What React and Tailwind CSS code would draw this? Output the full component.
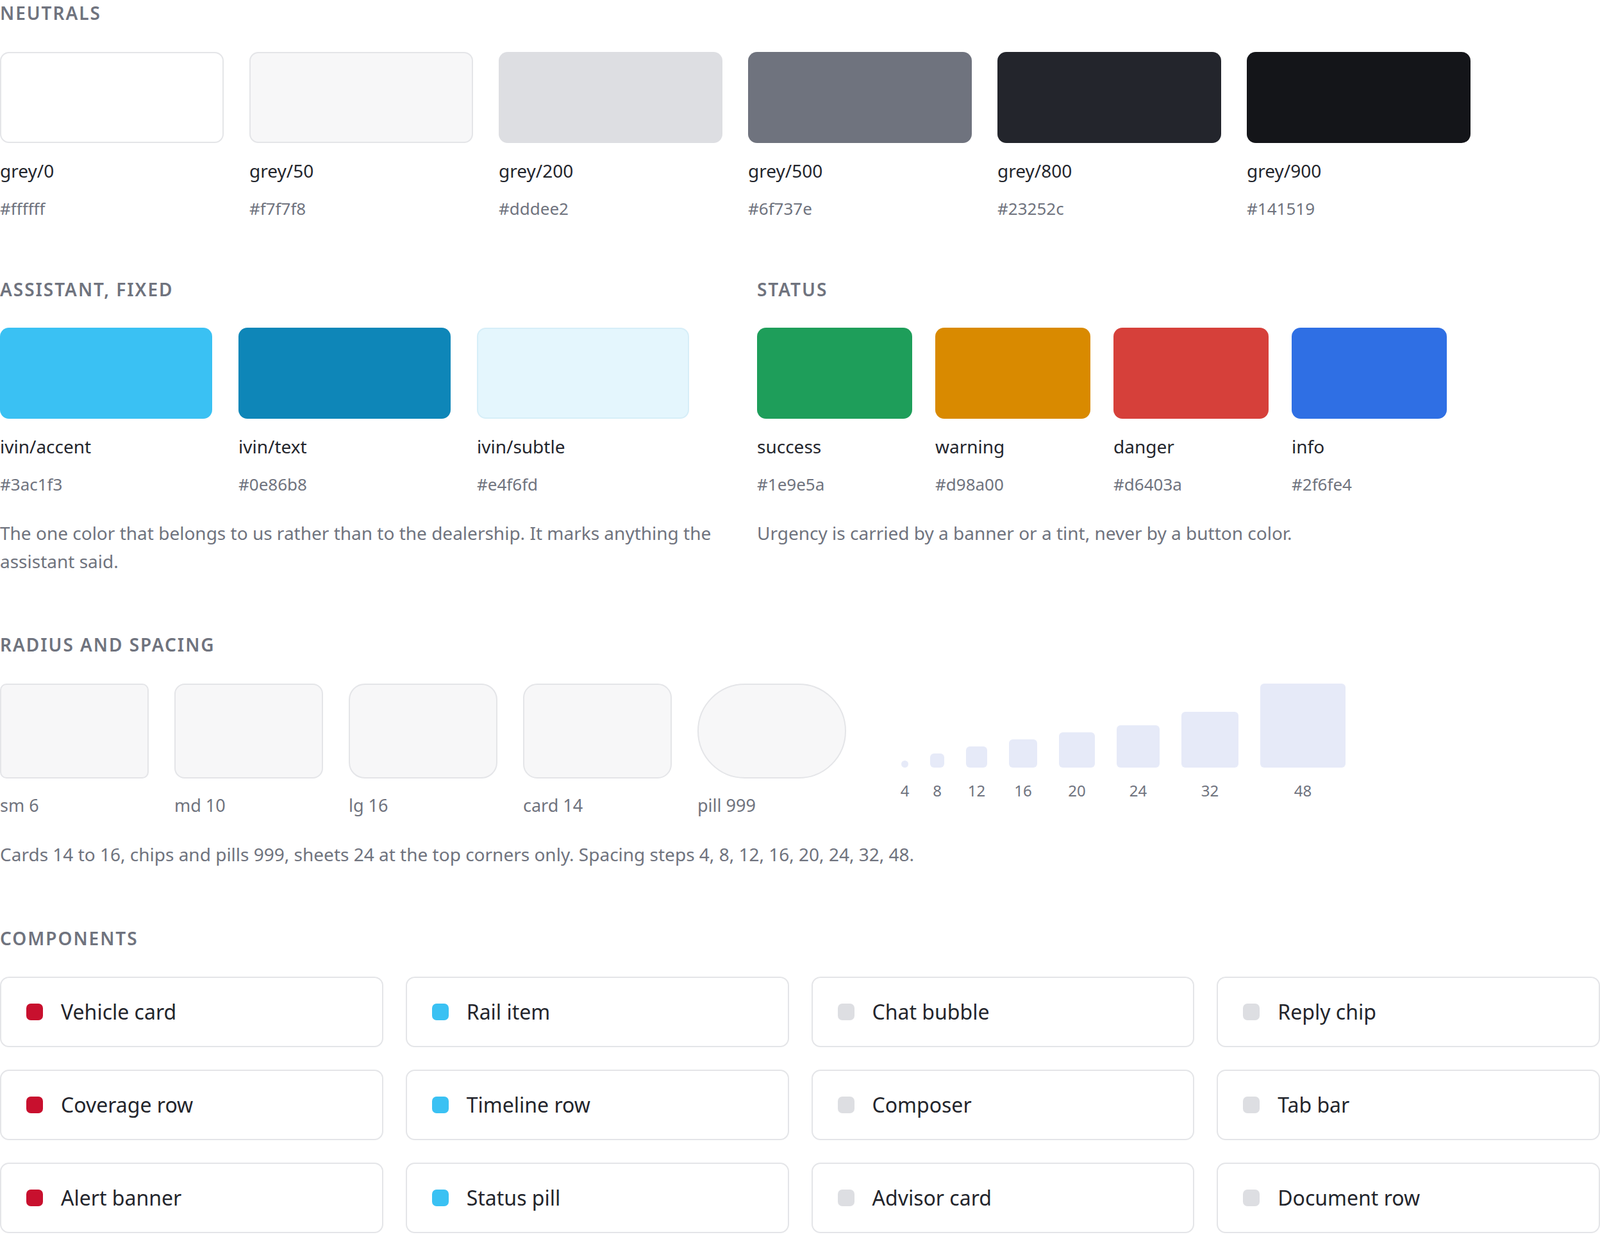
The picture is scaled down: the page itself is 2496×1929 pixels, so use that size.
import React from 'react';

const neutrals = [
  { name: 'grey/0', hex: '#ffffff', cls: 'bg-[#ffffff] border-2 border-[#e4e5e8]' },
  { name: 'grey/50', hex: '#f7f7f8', cls: 'bg-[#f7f7f8] border-2 border-[#e4e5e8]' },
  { name: 'grey/200', hex: '#dddee2', cls: 'bg-[#dddee2]' },
  { name: 'grey/500', hex: '#6f737e', cls: 'bg-[#6f737e]' },
  { name: 'grey/800', hex: '#23252c', cls: 'bg-[#23252c]' },
  { name: 'grey/900', hex: '#141519', cls: 'bg-[#141519]' },
];

const assistant = [
  { name: 'ivin/accent', hex: '#3ac1f3', cls: 'bg-[#3ac1f3]' },
  { name: 'ivin/text', hex: '#0e86b8', cls: 'bg-[#0e86b8]' },
  { name: 'ivin/subtle', hex: '#e4f6fd', cls: 'bg-[#e4f6fd] border-2 border-[#d6eef8]' },
];

const status = [
  { name: 'success', hex: '#1e9e5a', cls: 'bg-[#1e9e5a]' },
  { name: 'warning', hex: '#d98a00', cls: 'bg-[#d98a00]' },
  { name: 'danger', hex: '#d6403a', cls: 'bg-[#d6403a]' },
  { name: 'info', hex: '#2f6fe4', cls: 'bg-[#2f6fe4]' },
];

const radii = [
  { name: 'sm 6', cls: 'rounded-[10px]' },
  { name: 'md 10', cls: 'rounded-[16px]' },
  { name: 'lg 16', cls: 'rounded-[25px]' },
  { name: 'card 14', cls: 'rounded-[22px]' },
  { name: 'pill 999', cls: 'rounded-full' },
];

const spacing = [4, 8, 12, 16, 20, 24, 32, 48];

const components = [
  ['Vehicle card', 'Rail item', 'Chat bubble', 'Reply chip'],
  ['Coverage row', 'Timeline row', 'Composer', 'Tab bar'],
  ['Alert banner', 'Status pill', 'Advisor card', 'Document row'],
];
const dotColors = ['bg-[#c8102e]', 'bg-[#3ac1f3]', 'bg-[#dddee2]', 'bg-[#dddee2]'];

function Heading({ children, className = '' }) {
  return (
    <h2 className={`text-[28px] leading-[40px] font-semibold tracking-[0.07em] text-[#6f737e] ${className}`}>
      {children}
    </h2>
  );
}

function Swatch({ s, w }) {
  return (
    <div className={w}>
      <div className={`h-[142px] rounded-[14px] ${s.cls}`} />
      <div className="mt-[23px] text-[28px] leading-[40px] text-[#23252c]">{s.name}</div>
      <div className="mt-[19px] text-[26px] leading-[40px] text-[#6f737e]">{s.hex}</div>
    </div>
  );
}

export default function App() {
  return (
    <div className="w-[2496px] min-h-[1929px] bg-white font-['Inter',sans-serif]">
      <Heading>NEUTRALS</Heading>
      <div className="mt-[41px] flex gap-[40px]">
        {neutrals.map((s) => <Swatch key={s.name} s={s} w="w-[349px]" />)}
      </div>

      <div className="mt-[86px] flex gap-[67px]">
        <div className="w-[1114px]">
          <Heading>ASSISTANT, FIXED</Heading>
          <div className="mt-[40px] flex gap-[41px]">
            {assistant.map((s) => <Swatch key={s.name} s={s} w="w-[331px]" />)}
          </div>
          <p className="mt-[34px] text-[28px] leading-[44px] text-[#6f737e]">
            The one color that belongs to us rather than to the dealership. It marks anything the assistant said.
          </p>
        </div>
        <div className="flex-1">
          <Heading>STATUS</Heading>
          <div className="mt-[40px] flex gap-[36px]">
            {status.map((s) => <Swatch key={s.name} s={s} w="w-[242px]" />)}
          </div>
          <p className="mt-[34px] text-[28px] leading-[44px] text-[#6f737e]">
            Urgency is carried by a banner or a tint, never by a button color.
          </p>
        </div>
      </div>

      <Heading className="mt-[88px]">RADIUS AND SPACING</Heading>
      <div className="mt-[41px] flex items-start">
        <div className="flex gap-[40px]">
          {radii.map((r) => (
            <div key={r.name} className="w-[232px]">
              <div className={`h-[148px] bg-[#f7f7f8] border-2 border-[#e4e5e8] ${r.cls}`} />
              <div className="mt-[22px] text-[27px] leading-[40px] text-[#6f737e]">{r.name}</div>
            </div>
          ))}
        </div>
        <div className="ml-[86px] flex items-end gap-[34px] h-[131px]">
          {spacing.map((v) => (
            <div key={v} className="relative flex flex-col items-center">
              <div
                className="bg-[#e6eaf8] rounded-[6px]"
                style={{ width: Math.round(v * 2.78), height: Math.round(v * 2.73) }}
              />
              <div className="absolute top-full mt-[20px] text-[24px] leading-[32px] text-[#6f737e]">{v}</div>
            </div>
          ))}
        </div>
      </div>
      <p className="mt-[34px] text-[28px] leading-[44px] text-[#6f737e]">
        Cards 14 to 16, chips and pills 999, sheets 24 at the top corners only. Spacing steps 4, 8, 12, 16, 20, 24, 32, 48.
      </p>

      <Heading className="mt-[89px]">COMPONENTS</Heading>
      <div className="mt-[40px] grid grid-cols-4 gap-[35px]">
        {components.flat().map((name, i) => (
          <div
            key={name}
            className="h-[110px] rounded-[14px] border-2 border-[#e4e5e8] flex items-center pl-[39px] gap-[28px]"
          >
            <span className={`w-[26px] h-[26px] rounded-[7px] ${dotColors[i % 4]}`} />
            <span className="text-[32px] text-[#23252c]">{name}</span>
          </div>
        ))}
      </div>
    </div>
  );
}
